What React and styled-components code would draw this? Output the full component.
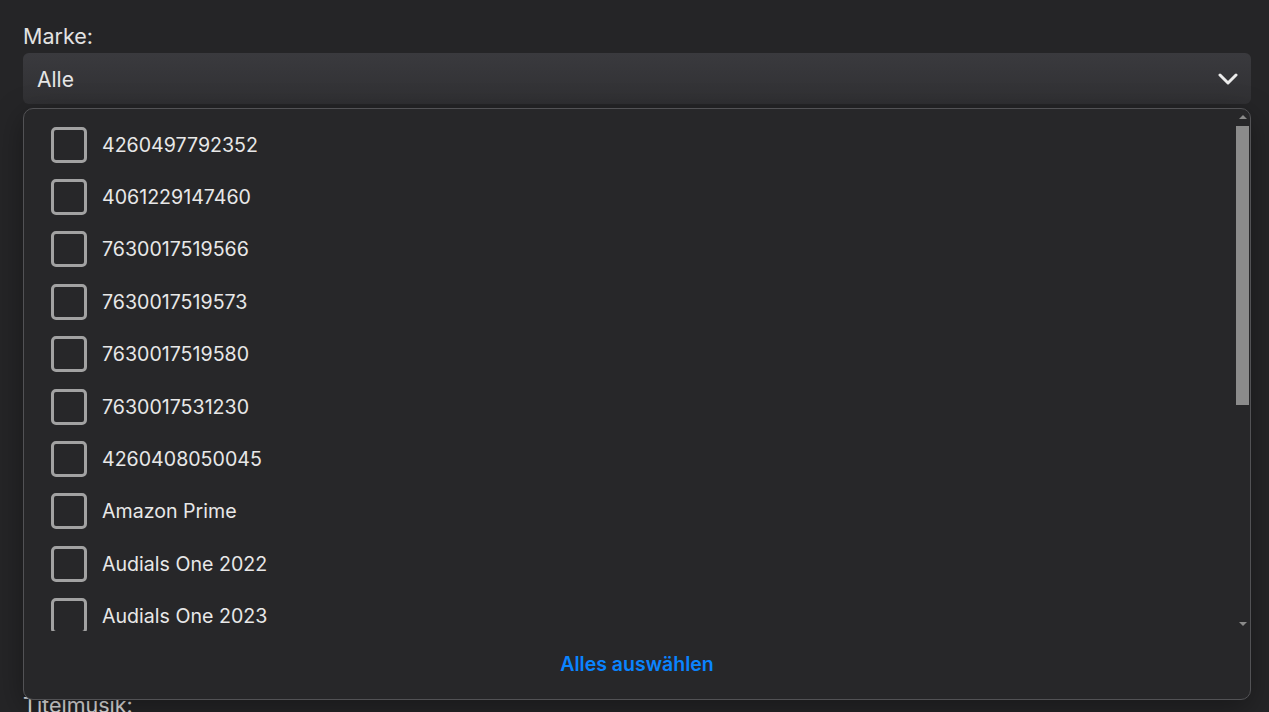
import React from 'react';
import styled, { createGlobalStyle } from 'styled-components';

const GlobalStyle = createGlobalStyle`
    html, body {
        margin: 0;
        background: #252527;
        font-family: Inter, "Noto Sans", sans-serif;
        overflow: hidden;
    }
`

const brands = [
    '4260497792352',
    '4061229147460',
    '7630017519566',
    '7630017519573',
    '7630017519580',
    '7630017531230',
    '4260408050045',
    'Amazon Prime',
    'Audials One 2022',
    'Audials One 2023',
    'Audials One 2024',
    'Avast',
    'AVG',
    'Avira',
    'Bitdefender',
    'Brother',
    'Canon',
]

const hiddenFields = ['Kategorie:', 'Plattform:', 'Sprache:', 'Lizenz:', 'Laufzeit:', 'Genre:']

function Chevron() {
    return (
        <svg width="20" height="12" viewBox="0 0 20 12">
            <polyline points="2,2 10,10 18,2" fill="none" stroke="#ececec" strokeWidth="3" strokeLinecap="round" strokeLinejoin="round"/>
        </svg>
    )
}

function App() {
    return (
        <Page>
            <GlobalStyle/>
            <Field>
                <Label>Marke:</Label>
                <SelectWrap>
                    <Select>
                        <span>Alle</span>
                        <Chevron/>
                    </Select>
                    <Dropdown>
                        <List>
                            {brands.map(b => (
                                <Row key={b}>
                                    <Box type='checkbox'/>
                                    <RowText>{b}</RowText>
                                </Row>
                            ))}
                        </List>
                        {/* scrollbar drawn by hand, headless chrome hides the native one */}
                        <Scrollbar>
                            <Arrow dir='up'/>
                            <Thumb/>
                            <Arrow dir='down'/>
                        </Scrollbar>
                        <Footer>
                            <SelectAll>Alles auswählen</SelectAll>
                        </Footer>
                    </Dropdown>
                </SelectWrap>
            </Field>
            {hiddenFields.map(f => (
                <Field key={f}>
                    <Label>{f}</Label>
                    <Select><span>Alle</span><Chevron/></Select>
                </Field>
            ))}
            <Field>
                <Label>Titelmusik:</Label>
            </Field>
        </Page>
    )
}

const Page = styled.div`
    padding: 24px 18px 0 23px;
    height: 712px;
    box-sizing: border-box;
`
const Field = styled.div`
    margin-bottom: 15.6px;
`
const Label = styled.div`
    font-size: 21.5px;
    line-height: 24px;
    color: #e2e2e2;
    margin-bottom: 5px;
`
const SelectWrap = styled.div`
    position: relative;
`
const Select = styled.div`
    height: 51px;
    box-sizing: border-box;
    display: flex;
    align-items: center;
    justify-content: space-between;
    padding: 1px 13px 0 14px;
    border-radius: 6px;
    background: linear-gradient(#3a3a3e, #303033);
    color: #e6e6e6;
    font-size: 21px;
`
const Dropdown = styled.div`
    position: absolute;
    top: calc(100% + 4px);
    left: 0;
    right: 0;
    height: 592px;
    box-sizing: border-box;
    display: flex;
    flex-direction: column;
    background: #272729;
    border: 1px solid #525255;
    border-radius: 10px;
    box-shadow: 0 8px 30px rgba(0, 0, 0, 0.35);
    z-index: 2;
`
const List = styled.div`
    height: 522px;
    overflow: hidden;
    padding: 9.5px 0 0 27px;
    box-sizing: border-box;
`
const Row = styled.label`
    height: 52.4px;
    flex-shrink: 0;
    display: flex;
    align-items: center;
    gap: 15px;
`
const Box = styled.input`
    appearance: none;
    margin: 0;
    width: 36px;
    height: 36px;
    box-sizing: border-box;
    border: 3px solid #a2a2a2;
    border-radius: 5px;
    background: transparent;
`
const RowText = styled.span`
    font-size: 19.6px;
    color: #e8e8e8;
`
const Scrollbar = styled.div`
    position: absolute;
    top: 0;
    right: 0;
    width: 15px;
    height: 522px;
    display: flex;
    flex-direction: column;
    align-items: center;
`
const Arrow = styled.div`
    height: 15px;
    width: 15px;
    display: flex;
    align-items: center;
    justify-content: center;
    margin-top: ${p => p.dir === 'down' ? 'auto' : '0'};

    &::before {
        content: '';
        border-left: 4px solid transparent;
        border-right: 4px solid transparent;
        ${p => p.dir === 'up' ? 'border-bottom: 4px solid #8a8a8a;' : 'border-top: 4px solid #8a8a8a;'}
    }
`
const Thumb = styled.div`
    margin-top: 2px;
    width: 13px;
    height: 279px;
    background: #8b8b8b;
`
const Footer = styled.div`
    flex: 1;
    display: flex;
    align-items: center;
    justify-content: center;
`
const SelectAll = styled.button`
    background: none;
    border: none;
    font-family: inherit;
    font-size: 19.5px;
    font-weight: 600;
    color: #0a84ff;
    padding: 0;
    margin-bottom: 3px;
`

export default App;
